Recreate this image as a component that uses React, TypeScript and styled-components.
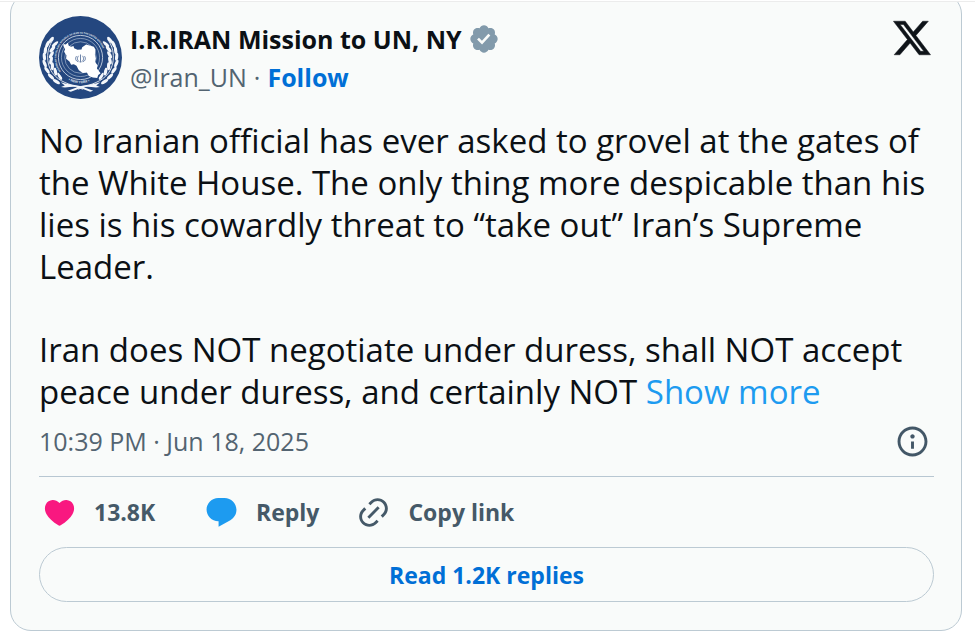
import React from "react";
import styled, { createGlobalStyle } from "styled-components";

const GlobalStyle = createGlobalStyle`
  * { box-sizing: border-box; }
  body {
    margin: 0;
    background: #fff;
    color: #0b1015;
    font-family: "Open Sans", "Noto Sans", sans-serif;
  }
  button { font-family: inherit; }
`;

const Page = styled.main`
  padding: 0 13px 7px 10px;
`;

const TopRule = styled.div`
  position: absolute;
  top: 0;
  left: 0;
  right: 0;
  height: 2px;
  background: #fff;
  border-bottom: 1px solid #ececec;
`;

const Card = styled.article`
  margin-top: -7px;
  padding: 22px 27px 28px 28px;
  background: #f9fbfa;
  border: 1px solid #bccad3;
  border-radius: 21px;
  display: flow-root;
`;

const Header = styled.header`
  display: flex;
  align-items: flex-start;
`;

const Avatar = styled.svg`
  width: 83px;
  height: 83px;
  flex: none;
  display: block;
`;

const Identity = styled.div`
  flex: 1;
  margin-left: 8px;
  padding-top: 3px;
`;

const NameRow = styled.div`
  display: flex;
  align-items: center;
  gap: 6px;
  height: 39px;
`;

const Name = styled.a`
  color: #0b1015;
  font-size: 25px;
  font-weight: 700;
  text-decoration: none;
  white-space: nowrap;
`;

const HandleRow = styled.div`
  display: flex;
  align-items: center;
  gap: 7px;
  height: 37px;
  color: #536471;
  font-size: 25px;
`;

const Handle = styled.a`
  color: inherit;
  text-decoration: none;
`;

const Follow = styled.a`
  color: #006fd6;
  font-weight: 700;
  text-decoration: none;
`;

const LogoLink = styled.a`
  display: block;
  padding: 4px 3px 0 0;
  color: #0f1419;
`;

const Icon = styled.svg<{ $w: number; $h?: number; $color?: string }>`
  display: block;
  flex: none;
  width: ${(p) => p.$w}px;
  height: ${(p) => p.$h ?? p.$w}px;
  fill: ${(p) => p.$color ?? "currentColor"};
`;

const Body = styled.div`
  display: flex;
  flex-direction: column;
  gap: 41px;
  margin-top: 21px;
  font-size: 33px;
  line-height: 42px;
`;

const Paragraph = styled.p`
  margin: 0;
`;

const More = styled.a`
  color: #1d9bf0;
  text-decoration: none;
`;

const Meta = styled.div`
  display: flex;
  align-items: center;
  justify-content: space-between;
  height: 56px;
  margin-bottom: 7px;
  padding-right: 4px;
  color: #536471;
  font-size: 25px;
`;

const InfoButton = styled.button`
  padding: 0;
  border: 0;
  background: none;
  color: #435767;
  cursor: pointer;
`;

const Actions = styled.div`
  display: flex;
  align-items: center;
  gap: 37px;
  height: 71px;
  padding-left: 3px;
  border-top: 1px solid #b8c7d2;
`;

const Action = styled.button<{ $minWidth?: number }>`
  display: flex;
  align-items: center;
  gap: 17px;
  min-width: ${(p) => p.$minWidth ?? 0}px;
  padding: 0;
  border: 0;
  background: none;
  color: #455968;
  font-size: 23px;
  font-weight: 700;
  cursor: pointer;
`;

const Replies = styled.a`
  display: flex;
  align-items: center;
  justify-content: center;
  height: 55px;
  border: 1px solid #bccad3;
  border-radius: 28px;
  color: #006fd6;
  font-size: 23px;
  font-weight: 700;
  text-decoration: none;
`;

const leaves = [
  [63, 96, 38], [52, 109, 22], [46, 127, 8], [43, 146, -6], [44, 166, -22],
  [51, 186, -34], [63, 205, -46], [79, 220, -58],
  [75, 108, 50], [67, 123, 40], [64, 140, 28], [63, 157, 14],
  [67, 174, 0], [76, 190, -12], [89, 204, -28],
];

function Branch() {
  return (
    <g>
      <path d="M70 94C47 122 45 176 77 205c21 20 51 25 81 38" fill="none" stroke="#fff" strokeWidth="2.5" />
      {leaves.map(([x, y, a]) => (
        <ellipse key={`${x}-${y}`} cx={x} cy={y} rx="4.8" ry="12" transform={`rotate(${a} ${x} ${y})`} fill="#f4f7fb" />
      ))}
      <path d="M92 222c21 7 42 7 61 12l36 13-9 3-36-13c-16-4-36 3-51-1l11-4z" fill="#f4f7fb" />
    </g>
  );
}

function Emblem() {
  return (
    <Avatar viewBox="27 24 248 248" role="img" aria-label="I.R.IRAN Mission to UN, NY">
      <defs>
        <path id="ring" d="M92 190A72 72 0 1 1 210 190" />
        <path id="foot" d="M106 210A76 76 0 0 0 196 210" />
      </defs>
      <circle cx="151" cy="148" r="124" fill="#24477f" />
      <Branch />
      <g transform="translate(302 0) scale(-1 1)">
        <Branch />
      </g>
      <circle cx="151" cy="148" r="80" fill="#24477f" />
      <g fill="none" stroke="#d5deea">
        <circle cx="151" cy="148" r="66" strokeWidth="2.5" />
        <circle cx="151" cy="148" r="57" strokeWidth="1.5" />
        <circle cx="151" cy="148" r="47" strokeWidth="1.5" />
      </g>
      <g fill="#e1e8f1" fontSize="7" fontWeight="700">
        <text>
          <textPath href="#ring">MISSION OF THE ISLAMIC REPUBLIC OF IRAN TO THE UNITED NATIONS</textPath>
        </text>
        <text fontSize="10">
          <textPath href="#foot" startOffset="10">• NEW YORK •</textPath>
        </text>
      </g>
      <path
        d="M100 108l7 1 6-5 3 9 7 3 7-2 2 6 10 5 12-1 2-7 12-8 10 3 13 4 5 9-2 13 3 13-3 10 8 10-2 10 11 14-7 5-3 9-13-1-12-5-6-10-12 1-12-8-7-13-8-5-8 2-5-10-10-8 1-11-7-10 3-8-5-9z"
        fill="#fff"
      />
      <g fill="none" stroke="#24477f" strokeWidth="2">
        <path d="M151 139v24M145 143c-5 7-4 14 3 18M157 143c5 7 4 14-3 18M139 144c-5 8-2 14 5 17M163 144c5 8 2 14-5 17" />
      </g>
    </Avatar>
  );
}

export default function App() {
  return (
    <Page>
      <GlobalStyle />
      <Card>
        <Header>
          <Emblem />
          <Identity>
            <NameRow>
              <Name href="#profile">I.R.IRAN Mission to UN, NY</Name>
              <Icon $w={32} $color="#829aab" viewBox="0 0 24 24" role="img" aria-label="Verified account">
                <path d="M22.25 12c0-1.43-.88-2.67-2.19-3.34.46-1.39.2-2.9-.81-3.91s-2.52-1.27-3.91-.81c-.66-1.31-1.91-2.19-3.34-2.19s-2.67.88-3.33 2.19c-1.4-.46-2.91-.2-3.92.81s-1.26 2.52-.8 3.91c-1.31.67-2.2 1.91-2.2 3.34s.89 2.67 2.2 3.34c-.46 1.39-.21 2.9.8 3.91s2.52 1.26 3.91.81c.67 1.31 1.91 2.19 3.34 2.19s2.68-.88 3.34-2.19c1.39.45 2.9.2 3.91-.81s1.27-2.52.81-3.91c1.31-.67 2.19-1.91 2.19-3.34zm-11.71 4.2L6.8 12.46l1.41-1.42 2.26 2.26 4.8-5.23 1.47 1.36-6.2 6.77z" />
              </Icon>
            </NameRow>
            <HandleRow>
              <Handle href="#profile">@Iran_UN</Handle>
              <span>·</span>
              <Follow href="#follow">Follow</Follow>
            </HandleRow>
          </Identity>
          <LogoLink href="#post" aria-label="View on X">
            <Icon $w={38} $h={36} viewBox="1 2 22.1 20">
              <path
                d="M18.244 2.25h3.308l-7.227 8.26 8.502 11.24H16.17l-5.214-6.817L4.99 21.75H1.68l7.73-8.835L1.254 2.25H8.08l4.713 6.231zm-1.161 17.52h1.833L7.084 4.126H5.117z"
                stroke="currentColor"
                strokeWidth="0.3"
              />
            </Icon>
          </LogoLink>
        </Header>
        <Body>
          <Paragraph>
            No Iranian official has ever asked to grovel at the gates of the White House. The only thing more
            despicable than his lies is his cowardly threat to “take out” Iran’s Supreme Leader.
          </Paragraph>
          <Paragraph>
            Iran does NOT negotiate under duress, shall NOT accept peace under duress, and certainly NOT{" "}
            <More href="#more">Show more</More>
          </Paragraph>
        </Body>
        <Meta>
          <time dateTime="2025-06-18T22:39">10:39 PM · Jun 18, 2025</time>
          <InfoButton aria-label="Information">
            <Icon $w={35} viewBox="0 0 24 24">
              <path d="M13.5 8.5c0 .83-.67 1.5-1.5 1.5s-1.5-.67-1.5-1.5S11.17 7 12 7s1.5.67 1.5 1.5zM13 17v-5h-2v5h2zm-1 5.25c5.66 0 10.25-4.59 10.25-10.25S17.66 1.75 12 1.75 1.75 6.34 1.75 12 6.34 22.25 12 22.25zM20.25 12c0 4.56-3.69 8.25-8.25 8.25S3.75 16.56 3.75 12 7.44 3.75 12 3.75s8.25 3.69 8.25 8.25z" />
            </Icon>
          </InfoButton>
        </Meta>
        <Actions>
          <Action aria-label="Like, 13.8K" $minWidth={125}>
            <Icon $w={35} $color="#f91880" viewBox="0 0 24 24">
              <path d="M20.884 13.19c-1.351 2.48-4.001 5.12-8.379 7.67l-.503.3-.504-.3c-4.379-2.55-7.029-5.19-8.382-7.67-1.36-2.5-1.41-4.86-.514-6.67.887-1.79 2.647-2.91 4.601-3.01 1.651-.09 3.368.56 4.798 2.01 1.429-1.45 3.146-2.1 4.796-2.01 1.954.1 3.714 1.22 4.601 3.01.896 1.81.846 4.17-.514 6.67z" />
            </Icon>
            13.8K
          </Action>
          <Action>
            <Icon $w={35} $color="#1d9bf0" viewBox="0 0 24 24">
              <path d="M1.751 10c0-4.42 3.584-8 8.005-8h4.366c4.49 0 8.129 3.64 8.129 8.13 0 2.96-1.607 5.68-4.196 7.11l-8.054 4.46v-3.69h-.067c-4.49.1-8.183-3.51-8.183-8.01z" />
            </Icon>
            Reply
          </Action>
          <Action>
            <Icon $w={35} viewBox="0 0 24 24">
              <path d="M18.36 5.64c-1.95-1.96-5.11-1.96-7.07 0L9.88 7.05 8.46 5.64l1.42-1.42c2.73-2.73 7.16-2.73 9.9 0 2.73 2.74 2.73 7.17 0 9.9l-1.42 1.42-1.41-1.42 1.41-1.41c1.96-1.96 1.96-5.12 0-7.07zm-2.12 3.53l-7.07 7.07-1.41-1.41 7.07-7.07 1.41 1.41zm-12.02.71l1.42-1.42 1.41 1.42-1.41 1.41c-1.96 1.96-1.96 5.12 0 7.07 1.95 1.96 5.11 1.96 7.07 0l1.41-1.41 1.42 1.41-1.42 1.42c-2.73 2.73-7.16 2.73-9.9 0-2.73-2.74-2.73-7.17 0-9.9z" />
            </Icon>
            Copy link
          </Action>
        </Actions>
        <Replies href="#replies">Read 1.2K replies</Replies>
      </Card>
      <TopRule />
    </Page>
  );
}
